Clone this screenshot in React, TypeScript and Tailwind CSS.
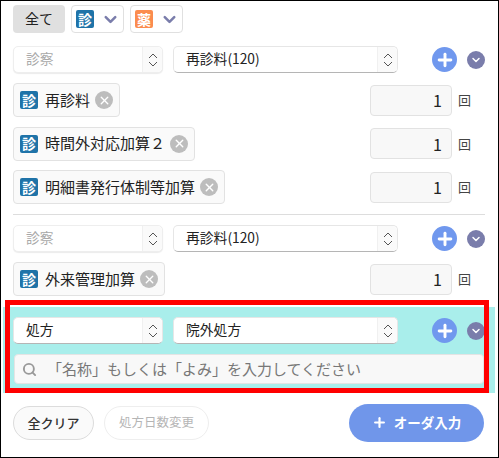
import { Plus, ChevronDown, X, Search } from "lucide-react";

const font = "[font-family:'Noto_Sans_CJK_JP','Noto_Sans',sans-serif]";

function Kind({ type = "shin" }: { type?: "shin" | "yaku" }) {
  return (
    <span
      className={`flex h-[18px] w-[18px] shrink-0 items-center justify-center rounded-[2px] pb-[1px] text-[14px] font-bold leading-none text-white ${
        type === "shin" ? "bg-[#1f73a8]" : "bg-[#fb8c4e]"
      }`}
    >
      {type === "shin" ? "診" : "薬"}
    </span>
  );
}

function Updown() {
  return (
    <svg width="10" height="14" viewBox="0 0 10 14" fill="none" stroke="#555" strokeWidth="1">
      <path d="M1 5 5 1l4 4M1 9l4 4 4-4" />
    </svg>
  );
}

function Select({ value, width, muted }: { value: string; width: string; muted?: boolean }) {
  return (
    <div
      className={`flex items-stretch justify-between rounded-[5px] bg-white text-[13.8px] ${width} ${
        muted
          ? "border border-[#eeeeee] text-[#a8a8a8] shadow-[0_1px_1px_rgba(0,0,0,0.08)]"
          : "border border-[#e6e6e6] border-b-[#b5b5b5] text-[#222]"
      }`}
    >
      <span className="flex items-center pb-[2px] pl-3 leading-none">{value}</span>
      <span className="flex w-[20px] items-center justify-center rounded-r-[5px] border-l border-[#f0f0f0] bg-[#fafafa]">
        <Updown />
      </span>
    </div>
  );
}

function Actions() {
  return (
    <div className="ml-[24px] flex items-center gap-[10px]">
      <span className="flex h-[25px] w-[25px] items-center justify-center rounded-full bg-[#7098ee] text-white">
        <Plus size={20} strokeWidth={3.5} />
      </span>
      <span className="flex h-[18px] w-[18px] items-center justify-center rounded-full bg-[#7a7dab] text-white">
        <ChevronDown size={12} strokeWidth={3} />
      </span>
    </div>
  );
}

function SelectRow({ left, right, muted }: { left: string; right: string; muted?: boolean }) {
  return (
    <div className="flex h-[27px] items-center gap-[10px] pl-[13px]">
      <Select value={left} width="h-[27px] w-[150px]" muted={muted} />
      <Select value={right} width="h-[27px] w-[225px]" />
      <Actions />
    </div>
  );
}

function ItemRow({ name }: { name: string }) {
  return (
    <div className="flex h-[34px] items-center justify-between pl-[13px] pr-[27px]">
      <div className="flex h-[34px] items-center rounded-[4px] border border-[#e2e2e2] bg-[#fafafa] pl-[6px] pr-[6px]">
        <Kind />
        <span className="ml-[7px] pb-[2px] text-[15px] leading-none text-[#222]">{name}</span>
        <span className="ml-[5px] flex h-[18px] w-[18px] items-center justify-center rounded-full bg-[#bdbdbd] text-white">
          <X size={13} strokeWidth={2.5} />
        </span>
      </div>
      <div className="flex items-center">
        <div className="flex h-[31px] w-[82px] items-center justify-end rounded-[4px] border border-[#e2e2e2] bg-[#f8f8f8] pr-[9px] text-[16px] text-[#222]">
          1
        </div>
        <span className="ml-[6px] w-[13px] pb-[1px] text-[13px] leading-none text-[#444]">回</span>
      </div>
    </div>
  );
}

export default function App() {
  return (
    <div className={`relative flex h-[458px] w-[499px] flex-col overflow-hidden border border-black bg-white pt-[4px] ${font}`}>
      <div className="flex h-[28px] gap-[6px] pl-[12px]">
        <button className="w-[52px] rounded-[4px] bg-[#e0e0e0] pb-[1px] text-[14px] text-[#222]">全て</button>
        {(["shin", "yaku"] as const).map((t) => (
          <div key={t} className="flex w-[53px] items-center justify-between rounded-[4px] border border-[#e0e0e0] pl-[4px] pr-[3px]">
            <Kind type={t} />
            <ChevronDown size={19} strokeWidth={3.2} className="text-[#7a7dab]" />
          </div>
        ))}
      </div>

      <div className="ml-[-1px] mt-[13px] flex flex-col">
        <SelectRow left="診察" right="再診料(120)" muted />
        <div className="mt-[10px] flex flex-col gap-[9.5px]">
          <ItemRow name="再診料" />
          <ItemRow name="時間外対応加算２" />
          <ItemRow name="明細書発行体制等加算" />
        </div>
        <div className="my-[10px] ml-[13px] mr-[13px] h-[1px] bg-[#dddddd]" />
        <SelectRow left="診察" right="再診料(120)" muted />
        <div className="mt-[10px]">
          <ItemRow name="外来管理加算" />
        </div>

        <div className="mt-[11px] ml-[3px] mr-[3px] h-[86px] bg-[#a9eeeb] pt-[10px]">
          <div className="ml-[-3px]">
            <SelectRow left="処方" right="院外処方" />
          </div>
          <div className="ml-[11px] mt-[10px] flex h-[30px] w-[470px] items-center rounded-[4px] border border-[#e4e4e4] bg-[#f8f8f8] pl-[7px] text-[15px] text-[#777]">
            <Search size={15} strokeWidth={3} className="text-[#999]" />
            <span className="ml-[10px] pb-[2px] leading-none">「名称」もしくは「よみ」を入力してください</span>
          </div>
        </div>
      </div>

      <div className="absolute left-[4px] top-[299px] h-[93px] w-[484px] border-[5px] border-[#ff0000]" />

      <div className="mt-[11px] flex items-center pl-[12px] pr-[14px]">
        <button className="h-[34px] w-[81px] rounded-full border border-[#dcdcdc] bg-[#fafafa] pb-[1px] text-[13px] font-medium text-[#333]">
          全クリア
        </button>
        <button className="ml-[10px] h-[34px] w-[105px] rounded-full border border-[#eeeeee] pb-[1px] text-[12.5px] text-[#b5b5b5]">
          処方日数変更
        </button>
        <button className="ml-auto flex h-[38px] w-[135px] items-center justify-center gap-[7px] rounded-full bg-[#7096ea] pb-[1px] text-[13.5px] font-bold text-white">
          <Plus size={15} strokeWidth={3.5} />
          オーダ入力
        </button>
      </div>
    </div>
  );
}
